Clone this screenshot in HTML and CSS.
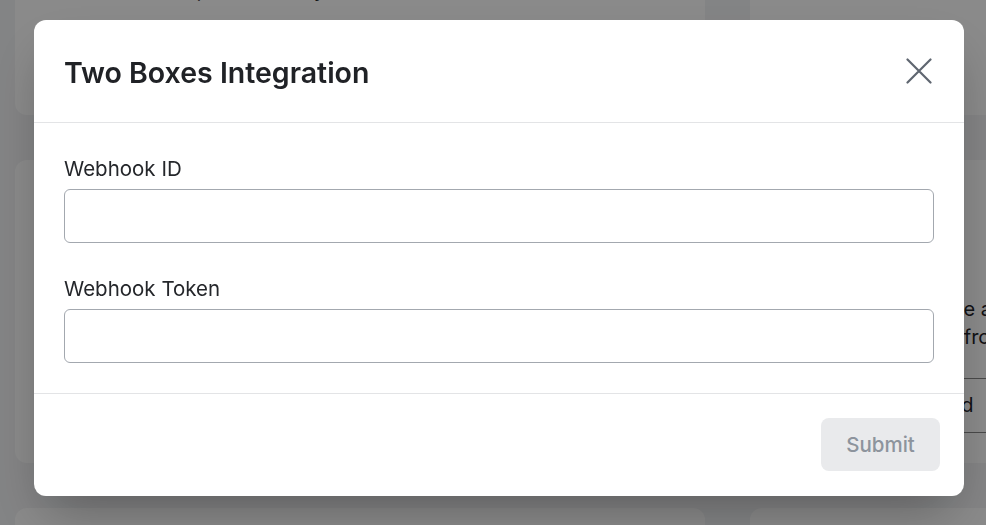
FILE: index.html
```html
<!DOCTYPE html>
<html lang="en">
<head>
<meta charset="utf-8">
<title>Two Boxes Integration</title>
<link rel="stylesheet" href="styles.css">
</head>
<body>
<div class="page">
  <div class="grid">
    <div class="card card-top"><p class="peek">Set up the delivery of leads</p></div>
    <div class="card card-top"></div>
    <div class="card"></div>
    <div class="card card-right">
      <p class="desc"><span class="line">Use a form to create a</span><span class="line">Receive new leads from</span></p>
      <div class="row">Not connected</div>
    </div>
    <div class="card"></div>
    <div class="card"></div>
  </div>
</div>
<div class="overlay">
  <div class="modal">
    <div class="modal-header">
      <h2 class="modal-title">Two Boxes Integration</h2>
      <button class="close" type="button" aria-label="Close">
        <svg width="26" height="26" viewBox="0 0 26 26" fill="none" stroke="currentColor" stroke-width="2.2" stroke-linecap="round"><path d="M1.5 1.5 L24.5 24.5 M24.5 1.5 L1.5 24.5"/></svg>
      </button>
    </div>
    <div class="modal-body">
      <div class="field">
        <label class="label" for="wid">Webhook ID</label>
        <input class="input" id="wid" type="text">
      </div>
      <div class="field">
        <label class="label" for="wtok">Webhook Token</label>
        <input class="input" id="wtok" type="text">
      </div>
    </div>
    <div class="modal-footer">
      <button class="submit" type="button" disabled>Submit</button>
    </div>
  </div>
</div>
</body>
</html>
```

FILE: styles.css
```css
* { box-sizing: border-box; }
html, body { margin: 0; padding: 0; }
body {
  width: 986px;
  height: 525px;
  overflow: hidden;
  background: #f3f4f6;
  font-family: Inter, "Helvetica Neue", Arial, sans-serif;
  color: #1f2328;
}
.page { padding-left: 15px; }
.grid {
  display: grid;
  grid-template-columns: 690px 300px;
  grid-template-rows: 115px 303px 200px;
  column-gap: 45px;
  row-gap: 45px;
}
.card {
  background: #fff;
  border-radius: 12px;
  overflow: hidden;
}
.card-top { border-top-left-radius: 0; border-top-right-radius: 0; }
.peek {
  margin: -24px 0 0 0;
  padding: 0 24px 0 133px;
  font-size: 20px;
  line-height: 28px;
  color: #1f2328;
  white-space: nowrap;
}
.card-right { padding-top: 135px; }
.desc {
  margin: 0;
  padding: 0 0 0 32px;
  font-size: 20px;
  line-height: 28px;
  color: #1f2328;
  white-space: nowrap;
}
.line { display: block; }
.row {
  margin-top: 27px;
  border-top: 1px solid #888;
  border-bottom: 1px solid #888;
  height: 55px;
  line-height: 53px;
  padding-left: 84px;
  font-size: 20px;
  color: #1f2328;
}
.overlay {
  position: fixed;
  inset: 0;
  background: rgba(0, 0, 0, 0.46);
  padding: 20px 22px 0 34px;
}
.modal {
  width: 930px;
  background: #fff;
  border-radius: 12px;
  box-shadow: 0 25px 50px -12px rgba(0, 0, 0, 0.3);
}
.modal-header {
  display: flex;
  align-items: center;
  justify-content: space-between;
  padding: 30px 32px 30px 30px;
  border-bottom: 1px solid #e3e4e6;
}
.modal-title {
  margin: 0;
  font-size: 28.5px;
  line-height: 42px;
  font-weight: 600;
  color: #202226;
  padding-top: 2px;
  margin-bottom: -2px;
}
.close {
  display: flex;
  padding: 0;
  border: 0;
  background: none;
  color: #5f6670;
}
.modal-body {
  padding: 30px;
  display: flex;
  flex-direction: column;
  gap: 30px;
}
.field { display: flex; flex-direction: column; }
.label {
  font-size: 20.5px;
  line-height: 28px;
  padding-top: 2px;
  margin-bottom: 6px;
  color: #25272b;
}
.input {
  width: 100%;
  height: 54px;
  border: 1px solid #a3a8af;
  border-radius: 6px;
  background: #fff;
  font: inherit;
}
.modal-footer {
  display: flex;
  justify-content: flex-end;
  padding: 24px 24px 25px;
  border-top: 1px solid #e3e4e6;
}
.submit {
  height: 53px;
  width: 119px;
  padding: 0;
  border: 0;
  border-radius: 8px;
  background: #e9eaec;
  color: #8d949d;
  font-family: inherit;
  font-size: 20.5px;
  font-weight: 500;
}
```
